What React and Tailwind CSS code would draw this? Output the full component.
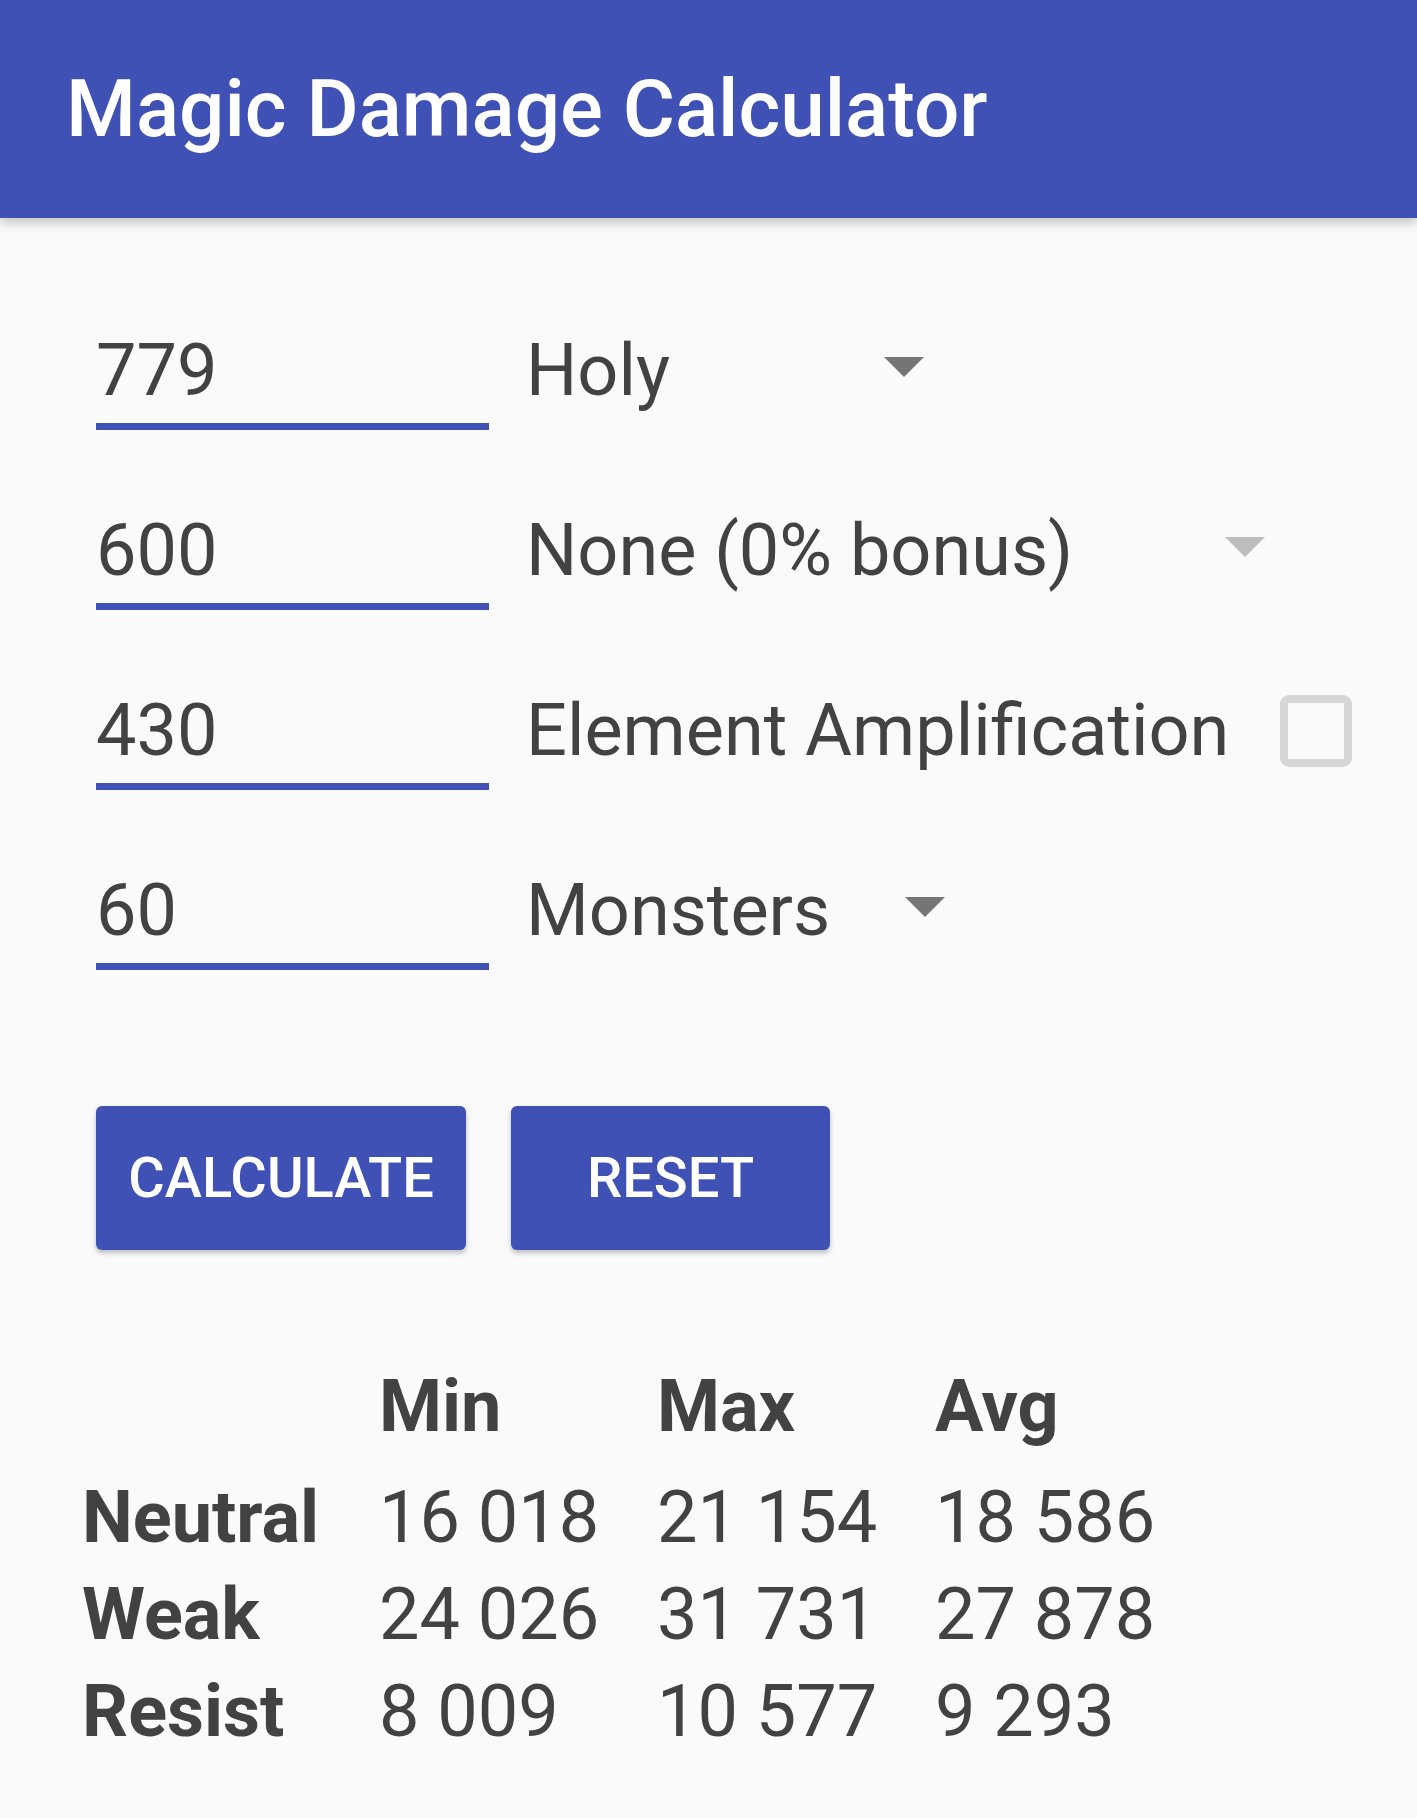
import React from "react";

const fields = [
  { value: "779", kind: "spinner", label: "Holy", width: "w-[358px]", arrow: "text-[#757575]" },
  { value: "600", kind: "spinner", label: "None (0% bonus)", width: "w-[699px]", arrow: "text-[#bdbdbd]" },
  { value: "430", kind: "check", label: "Element Amplification" },
  { value: "60", kind: "spinner", label: "Monsters", width: "w-[379px]", arrow: "text-[#757575]" },
];

const results = [
  { name: "Neutral", min: "16 018", max: "21 154", avg: "18 586" },
  { name: "Weak", min: "24 026", max: "31 731", avg: "27 878" },
  { name: "Resist", min: "8 009", max: "10 577", avg: "9 293" },
];

function Arrow({ color }) {
  return (
    <svg className={`mt-[22px] ${color}`} width="40" height="20" viewBox="0 0 40 20">
      <polygon points="0,0 40,0 20,20" fill="currentColor" />
    </svg>
  );
}

function FieldRow({ field }) {
  return (
    <div className="flex items-start">
      {/* text input with underline */}
      <div className="w-[393px]">
        <div className="text-[72px] leading-none text-[#424242]">{field.value}</div>
        <div className="mt-[16px] h-[7px] bg-[#3f51b5]" />
      </div>
      <div className="ml-[37px] flex items-start">
        {field.kind === "spinner" ? (
          <>
            <span className={`${field.width} text-[72px] leading-none text-[#424242]`}>{field.label}</span>
            <Arrow color={field.arrow} />
          </>
        ) : (
          <div className="flex h-[72px] items-center">
            <span className="w-[754px] text-[72px] leading-none text-[#424242]">{field.label}</span>
            <div className="h-[72px] w-[72px] rounded-[9px] border-[8px] border-[#d6d6d6]" />
          </div>
        )}
      </div>
    </div>
  );
}

export default function App() {
  return (
    <div className="min-h-[1818px] bg-[#fafafa] font-['Roboto','Liberation_Sans',sans-serif]">
      <header className="relative z-10 flex h-[218px] items-center bg-[#3f51b5] pl-[66px] shadow-[0_5px_10px_rgba(0,0,0,0.22)]">
        <h1 className="text-[80px] font-medium leading-none text-white">Magic Damage Calculator</h1>
      </header>

      {/* inputs */}
      <section className="flex flex-col gap-[85px] pl-[96px] pt-[117px]">
        {fields.map((f) => (
          <FieldRow key={f.value} field={f} />
        ))}
      </section>

      {/* buttons */}
      <div className="mt-[136px] flex gap-[45px] pl-[96px]">
        <button className="h-[144px] w-[370px] rounded-[6px] bg-[#3f51b5] text-[56px] font-medium leading-none text-white shadow-[0_3px_5px_rgba(0,0,0,0.25)]">
          CALCULATE
        </button>
        <button className="h-[144px] w-[319px] rounded-[6px] bg-[#3f51b5] text-[56px] font-medium leading-none text-white shadow-[0_3px_5px_rgba(0,0,0,0.25)]">
          RESET
        </button>
      </div>

      {/* results */}
      <div className="mt-[108px] pl-[82px] text-[72px] leading-[97px] text-[#424242]">
        <div className="grid grid-cols-[297px_278px_278px_auto] font-bold">
          <div />
          <div>Min</div>
          <div>Max</div>
          <div>Avg</div>
        </div>
        <div className="mt-[14px] grid grid-cols-[297px_278px_278px_auto]">
          {results.map((r) => (
            <React.Fragment key={r.name}>
              <div className="font-bold">{r.name}</div>
              <div>{r.min}</div>
              <div>{r.max}</div>
              <div>{r.avg}</div>
            </React.Fragment>
          ))}
        </div>
      </div>
    </div>
  );
}
